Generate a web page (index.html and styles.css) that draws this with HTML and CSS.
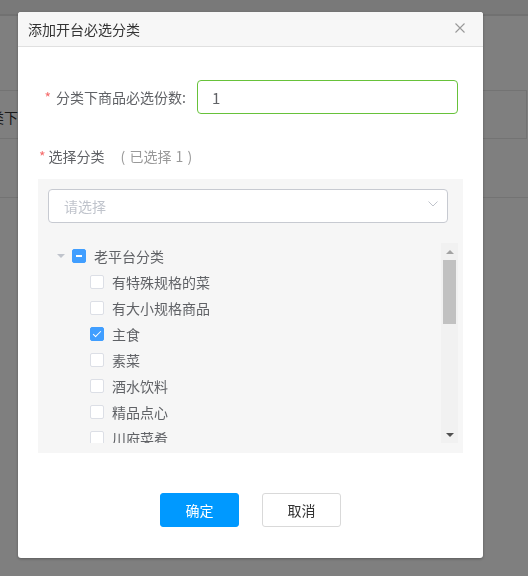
FILE: index.html
```html
<!DOCTYPE html>
<html lang="zh-CN">
<head>
  <meta charset="UTF-8">
  <meta name="viewport" content="width=device-width, initial-scale=1">
  <title>添加开台必选分类</title>
  <link rel="stylesheet" href="styles.css">
</head>
<body>
  <div class="page">
    <div class="page-top"></div>
    <div class="page-row page-row-head">
      <div class="page-cell-clip"><span>分类下</span></div>
    </div>
    <div class="page-row"></div>
  </div>

  <div class="mask"></div>

  <div class="dialog">
    <header class="dialog-header">
      <span class="dialog-title">添加开台必选分类</span>
      <span class="dialog-close" aria-label="关闭">
        <svg width="10" height="10" viewBox="0 0 10 10"><path d="M0.5 0.5L9.5 9.5M9.5 0.5L0.5 9.5" stroke="#999" stroke-width="1.1" fill="none"/></svg>
      </span>
    </header>

    <div class="dialog-body">
      <div class="form-row">
        <label class="form-label"><span class="req">*</span>分类下商品必选份数:</label>
        <input type="text" class="form-input" value="1">
      </div>

      <div class="form-label-line">
        <span class="req">*</span>选择分类<span class="picked">( 已选择 1 )</span>
      </div>

      <div class="panel">
        <div class="select">
          <span class="placeholder">请选择</span>
          <svg width="10" height="6" viewBox="0 0 10 6"><path d="M0.5 0.5L5 5L9.5 0.5" stroke="#c0c4cc" stroke-width="1" fill="none"/></svg>
        </div>

        <div class="tree">
          <ul class="tree-list">
            <li class="tree-node">
              <span class="caret"></span>
              <span class="checkbox half"></span>
              <span class="node-label">老平台分类</span>
            </li>
            <li class="tree-node child">
              <span class="caret empty"></span>
              <span class="checkbox"></span>
              <span class="node-label">有特殊规格的菜</span>
            </li>
            <li class="tree-node child">
              <span class="caret empty"></span>
              <span class="checkbox"></span>
              <span class="node-label">有大小规格商品</span>
            </li>
            <li class="tree-node child">
              <span class="caret empty"></span>
              <span class="checkbox checked"></span>
              <span class="node-label">主食</span>
            </li>
            <li class="tree-node child">
              <span class="caret empty"></span>
              <span class="checkbox"></span>
              <span class="node-label">素菜</span>
            </li>
            <li class="tree-node child">
              <span class="caret empty"></span>
              <span class="checkbox"></span>
              <span class="node-label">酒水饮料</span>
            </li>
            <li class="tree-node child">
              <span class="caret empty"></span>
              <span class="checkbox"></span>
              <span class="node-label">精品点心</span>
            </li>
            <li class="tree-node child">
              <span class="caret empty"></span>
              <span class="checkbox"></span>
              <span class="node-label">川府菜肴</span>
            </li>
          </ul>
          <div class="scrollbar">
            <span class="sb-btn up"></span>
            <span class="sb-track"><span class="sb-thumb"></span></span>
            <span class="sb-btn down"></span>
          </div>
        </div>
      </div>

      <div class="dialog-footer">
        <button class="btn btn-primary">确定</button>
        <button class="btn">取消</button>
      </div>
    </div>
  </div>
</body>
</html>
```

FILE: styles.css
```css
/* Base */
html, body {
  margin: 0;
  padding: 0;
}
body {
  width: 528px;
  height: 576px;
  overflow: hidden;
  background: #fff;
  font-family: "Noto Sans CJK SC", "Noto Sans", sans-serif;
  font-size: 14px;
  color: #333;
}
ul {
  margin: 0;
  padding: 0;
  list-style: none;
}

/* Page behind the mask */
.page-top {
  height: 14px;
  background: #f3f3f3;
  border-bottom: 2px solid #e2e2e2;
}
.page-row {
  height: 58px;
  border-bottom: 1px solid #e6e6e6;
}
.page-row-head {
  margin-top: 74px;
  height: 47px;
  border-top: 1px solid #e6e6e6;
  border-right: 1px solid #e6e6e6;
  width: 526px;
  display: flex;
  align-items: center;
}
.page-cell-clip {
  width: 18px;
  display: flex;
  justify-content: flex-end;
  overflow: hidden;
  white-space: nowrap;
  padding-top: 4px;
}

/* Mask */
.mask {
  position: fixed;
  inset: 0;
  background: rgba(0, 0, 0, 0.5);
}

/* Dialog */
.dialog {
  position: fixed;
  left: 18px;
  top: 12px;
  width: 465px;
  background: #fff;
  border-radius: 3px;
  box-shadow: 0 1px 3px rgba(0, 0, 0, 0.3);
  overflow: hidden;
}
.dialog-header {
  height: 34px;
  display: flex;
  align-items: center;
  justify-content: space-between;
  padding: 0 18px 0 10px;
  background: #f7f7f7;
  border-bottom: 1px solid #e0e0e0;
}
.dialog-title {
  font-size: 14px;
  color: #333;
  line-height: 20px;
}
.dialog-close {
  display: flex;
  width: 10px;
  height: 10px;
  margin-top: -2px;
}
.dialog-body {
  padding: 33px 20px 31px;
}

/* Form */
.req {
  color: #f56c6c;
  margin-right: 5px;
}
.form-row {
  display: flex;
  align-items: center;
  height: 34px;
}
.form-label {
  width: 148px;
  text-align: right;
  color: #606266;
  line-height: 20px;
  white-space: nowrap;
}
.form-input {
  flex: 1;
  margin: 0 5px 0 11px;
  height: 34px;
  box-sizing: border-box;
  padding: 0 14px;
  border: 1px solid #67c23a;
  border-radius: 4px;
  font-family: inherit;
  font-size: 15px;
  color: #606266;
  outline: none;
}
.form-label-line {
  margin-top: 32px;
  padding-left: 1px;
  line-height: 20px;
  color: #606266;
}
.form-label-line .req {
  margin-right: 3px;
}
.picked {
  color: #999;
  margin-left: 16px;
  word-spacing: 1px;
}

/* Panel with select and tree */
.panel {
  margin-top: 13px;
  background: #f6f6f6;
  padding: 10px 5px 10px 10px;
}
.select {
  width: 400px;
  height: 34px;
  box-sizing: border-box;
  border: 1px solid #c7cad1;
  border-radius: 4px;
  background: #fff;
  display: flex;
  align-items: center;
  justify-content: space-between;
  padding: 0 9px 0 15px;
}
.select svg {
  margin-top: -4px;
}
.placeholder {
  color: #c0c4cc;
}
.tree {
  margin-top: 20px;
  height: 200px;
  display: flex;
}
.tree-list {
  flex: 1;
  overflow: hidden;
}
.tree-node {
  height: 26px;
  display: flex;
  align-items: center;
  color: #606266;
}
.tree-node.child {
  padding-left: 18px;
}
.caret {
  width: 24px;
  display: flex;
  justify-content: center;
}
.caret::before {
  content: "";
  border-left: 4px solid transparent;
  border-right: 4px solid transparent;
  border-top: 4px solid #c0c4cc;
  margin-left: 1px;
}
.caret.empty::before {
  border-top-color: transparent;
}
.checkbox {
  position: relative;
  width: 14px;
  height: 14px;
  box-sizing: border-box;
  border: 1px solid #dcdfe6;
  border-radius: 2px;
  background: #fff;
  margin-right: 8px;
}
.checkbox.half,
.checkbox.checked {
  background: #409eff;
  border-color: #409eff;
}
.checkbox.half::after {
  content: "";
  position: absolute;
  left: 3px;
  right: 3px;
  top: 5px;
  height: 2px;
  background: #fff;
}
.checkbox.checked::after {
  content: "";
  position: absolute;
  left: 4px;
  top: 1px;
  width: 3px;
  height: 7px;
  border: 1px solid #fff;
  border-left: 0;
  border-top: 0;
  transform: rotate(45deg);
}

/* Fake scrollbar */
.scrollbar {
  width: 17px;
  display: flex;
  flex-direction: column;
  background: #f1f1f1;
}
.sb-btn {
  height: 17px;
  display: flex;
  align-items: center;
  justify-content: center;
}
.sb-btn::before {
  content: "";
  border-left: 4px solid transparent;
  border-right: 4px solid transparent;
}
.sb-btn.up::before {
  border-bottom: 4px solid #a3a3a3;
}
.sb-btn.down::before {
  border-top: 4px solid #505050;
}
.sb-track {
  flex: 1;
  padding: 0 2px;
}
.sb-thumb {
  display: block;
  height: 64px;
  background: #c1c1c1;
}

/* Footer buttons */
.dialog-footer {
  margin-top: 40px;
  display: flex;
  justify-content: center;
  gap: 23px;
}
.btn {
  width: 79px;
  height: 34px;
  border: 1px solid #d9d9d9;
  border-radius: 3px;
  background: #fff;
  color: #333;
  font-family: inherit;
  font-size: 14px;
  cursor: pointer;
}
.btn-primary {
  background: #0099ff;
  border-color: #0099ff;
  color: #fff;
}
```
